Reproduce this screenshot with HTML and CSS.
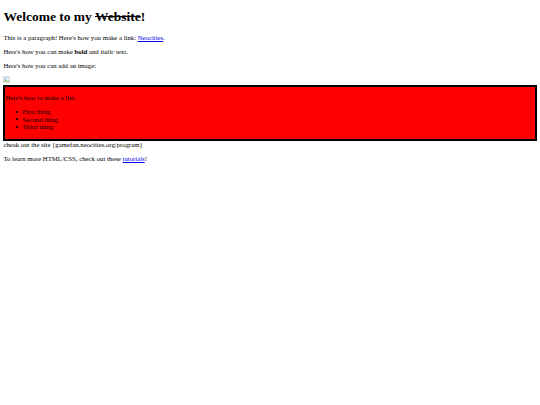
FILE: index.html
```html
<!DOCTYPE html>
<html>

<head>
    <title>My Website</title>
    <link rel="stylesheet" href="styles.css">
</head>

<body>
    <h1>Welcome to my <s>Website</s>!</h1>
    <p>This is a paragraph! Here's how you make a link: <a href="#">Neocities</a>.</p>
    <p>Here's how you can make <strong>bold</strong> and <em>italic</em> text.</p>
    <p>Here's how you can add an image:</p>
    <svg class="broken-image" viewBox="0 0 16 16">
        <path d="M1.5 .5H11L14.5 4V15.5H1.5Z" fill="#fff" stroke="#a3a3a3" />
        <path d="M11 .5V4H14.5" fill="#e8e8e8" stroke="#a3a3a3" />
        <path d="M3 3H9V8L3 12Z" fill="#b9d0f2" />
        <path d="M3 12L7 8L9 10L6 13Z" fill="#5fa84f" />
        <path d="M8 14L13 8V14Z" fill="#7fbf6a" />
    </svg>
    <div class="list-box">
        <p>Here's how to make a list:</p>
        <ul>
            <li>First thing</li>
            <li>Second thing</li>
            <li>Third thing</li>
        </ul>
    </div>
    <div>cheak out the site {gamefan.neocities.org/program}</div>
    <p class="outro">To learn more HTML/CSS, check out these <a href="#">tutorials</a>!</p>
</body>

</html>
```

FILE: styles.css
```css
body {
    margin: 3.4px;
    background: #fff;
    color: #000;
    font-family: 'Liberation Serif', serif;
    font-size: 6.75px;
}

h1 {
    margin: 6px 0 9px;
    font-size: 13.5px;
}

p {
    margin: 6.75px 0;
}

a {
    color: #00e;
}

.broken-image {
    display: block;
    width: 7px;
    height: 7px;
    margin: 2px 0;
}

.list-box {
    background: #f00;
    border: 2px solid #000;
    padding: 1px 0 1.5px;
}

ul {
    margin: 6.75px 0;
    padding-left: 10.8px;
    list-style: none;
}

li {
    display: flex;
    align-items: center;
    gap: 4.3px;
    height: 7.5px;
}

li::before {
    content: '';
    width: 2px;
    height: 2px;
    border-radius: 50%;
    background: #000;
}

.outro {
    margin-top: 7.5px;
}
```
